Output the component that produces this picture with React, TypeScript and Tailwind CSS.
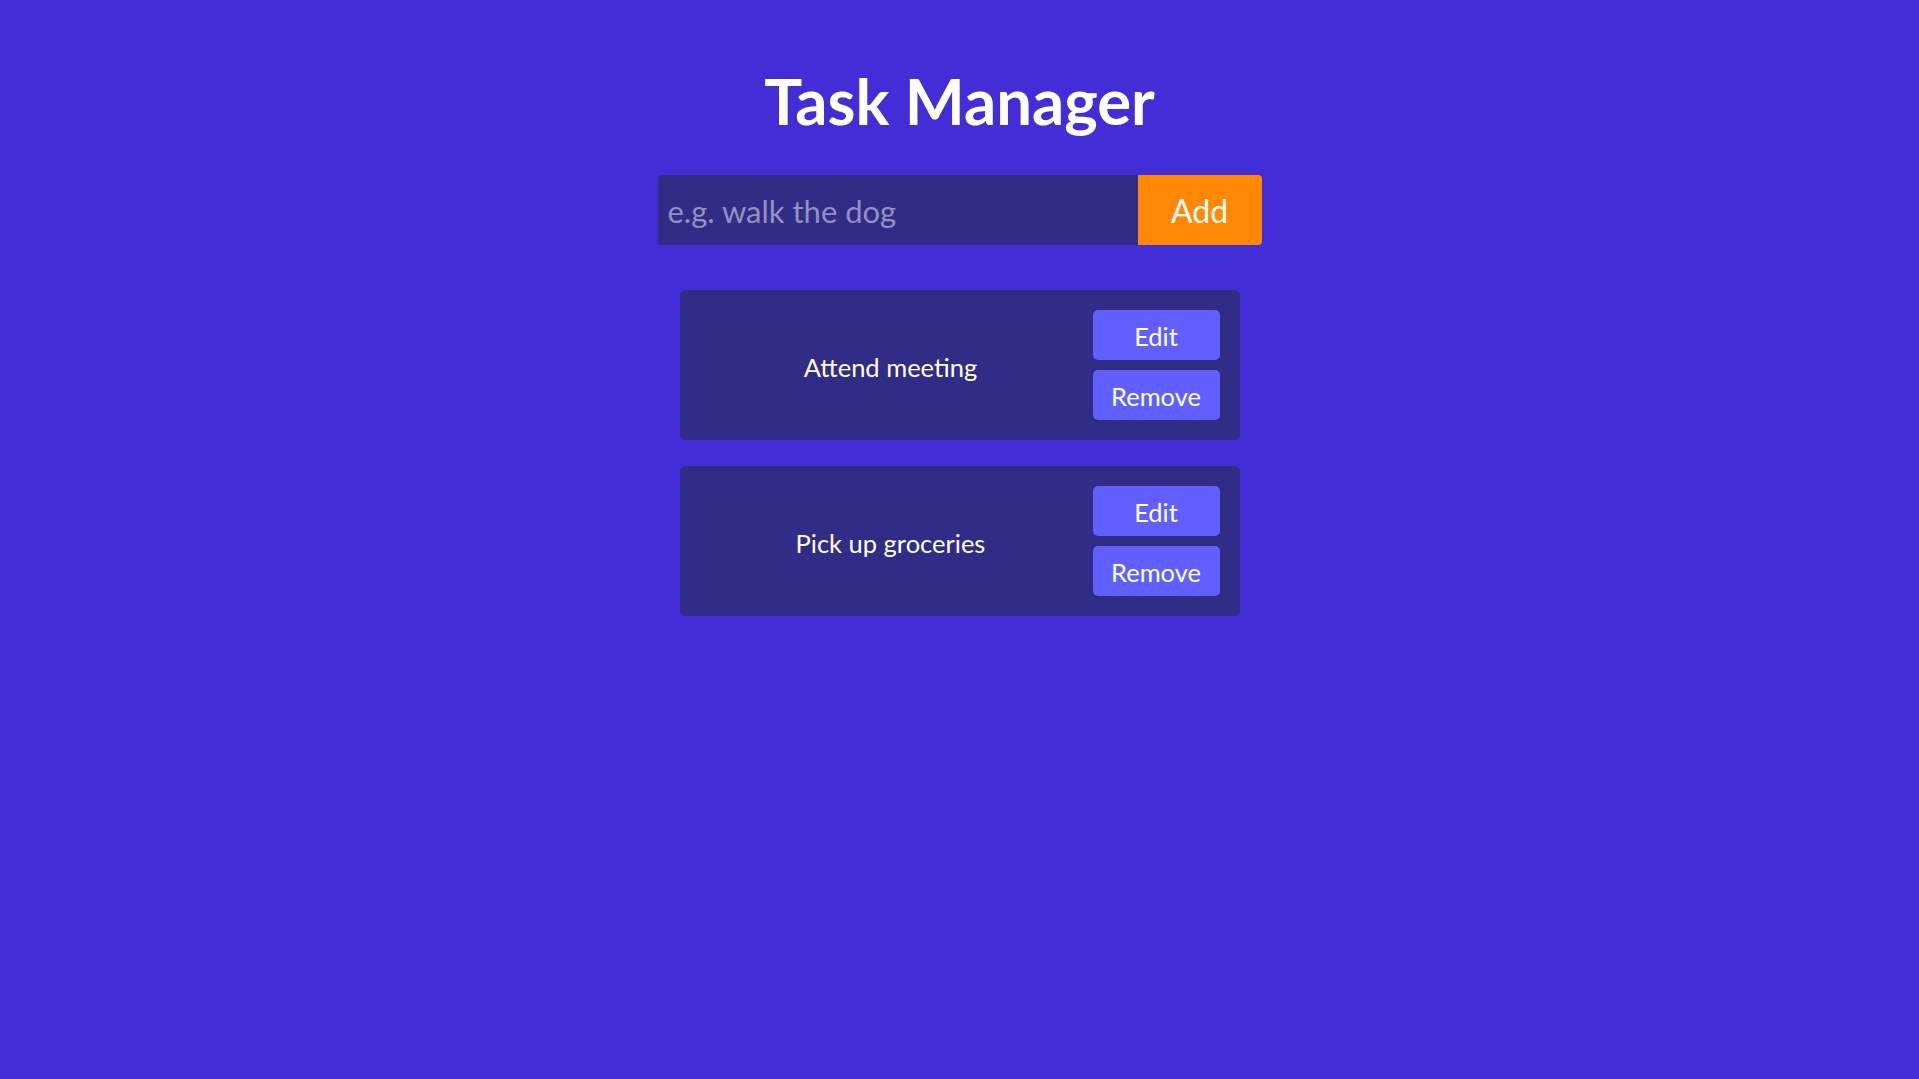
import { useState } from "react";

type Task = { id: number; text: string };

const initialTasks: Task[] = [
  { id: 1, text: "Attend meeting" },
  { id: 2, text: "Pick up groceries" },
];

export default function App() {
  const [tasks, setTasks] = useState<Task[]>(initialTasks);
  const [input, setInput] = useState("");

  function addTask(e: React.FormEvent<HTMLFormElement>) {
    e.preventDefault();
    const text = input.trim();
    if (!text) return;
    setTasks((prev) => [...prev, { id: Date.now(), text }]);
    setInput("");
  }

  function removeTask(id: number) {
    setTasks((prev) => prev.filter((t) => t.id !== id));
  }

  return (
    <div className="min-h-screen bg-[#432dd7] flex flex-col items-center font-['Lato',sans-serif] text-white">
      <h1 className="mt-[69px] text-[63.5px] leading-none font-bold">
        Task Manager
      </h1>

      <form onSubmit={addTask} className="mt-[42px] flex w-[604px] h-[70px]">
        <input
          value={input}
          onChange={(e) => setInput(e.target.value)}
          placeholder="e.g. walk the dog"
          className="flex-1 min-w-0 rounded-l-[4px] bg-[#312c85] px-[10px] pt-[3px] text-[31px] text-white placeholder:text-[#9391c0] outline-none"
        />
        <button
          type="submit"
          className="w-[124px] rounded-r-[4px] bg-[#ff8904] pt-[3px] text-[32px] text-white"
        >
          Add
        </button>
      </form>

      <div className="mt-[45px] flex flex-col gap-[26px]">
        {tasks.map((task) => (
          <div
            key={task.id}
            className="w-[560px] flex items-center gap-[11px] rounded-[6px] bg-[#312c85] px-[20px] py-[20px]"
          >
            <span className="flex-1 pt-[5px] text-center text-[25.5px]">
              {task.text}
            </span>
            <div className="flex flex-col gap-[10px] w-[127px]">
              <button
                type="button"
                className="h-[50px] rounded-[5px] bg-[#615fff] pt-[4px] text-[25.5px] text-white"
              >
                Edit
              </button>
              <button
                type="button"
                onClick={() => removeTask(task.id)}
                className="h-[50px] rounded-[5px] bg-[#615fff] pt-[4px] text-[25.5px] text-white"
              >
                Remove
              </button>
            </div>
          </div>
        ))}
      </div>
    </div>
  );
}
